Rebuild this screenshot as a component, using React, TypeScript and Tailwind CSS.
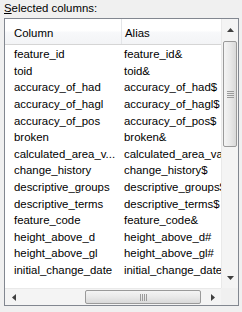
import React from "react";

const rows: [string, string][] = [
  ["feature_id", "feature_id&"],
  ["toid", "toid&"],
  ["accuracy_of_had", "accuracy_of_had$"],
  ["accuracy_of_hagl", "accuracy_of_hagl$"],
  ["accuracy_of_pos", "accuracy_of_pos$"],
  ["broken", "broken&"],
  ["calculated_area_v...", "calculated_area_value#"],
  ["change_history", "change_history$"],
  ["descriptive_groups", "descriptive_groups$"],
  ["descriptive_terms", "descriptive_terms$"],
  ["feature_code", "feature_code&"],
  ["height_above_d", "height_above_d#"],
  ["height_above_gl", "height_above_gl#"],
  ["initial_change_date", "initial_change_date$"],
];

function Arrow({ dir }: { dir: "up" | "down" | "left" | "right" }) {
  const pts: Record<string, string> = {
    up: "0,4 7,4 3.5,0",
    down: "0,0 7,0 3.5,4",
    left: "4,0 4,7 0,3.5",
    right: "0,0 0,7 4,3.5",
  };
  const vertical = dir === "up" || dir === "down";
  return (
    <svg width={vertical ? 7 : 4} height={vertical ? 4 : 7} viewBox={vertical ? "0 0 7 4" : "0 0 4 7"}>
      <polygon points={pts[dir]} fill="#404040" />
    </svg>
  );
}

export default function App() {
  return (
    <div
      className="w-[242px] h-[312px] bg-[#f0f0f0] text-[11.4px] text-black overflow-hidden"
      style={{ fontFamily: '"Liberation Sans", Arial, sans-serif' }}
    >
      <div className="pl-[4px] pt-[1px] h-[15px] leading-[14px]">
        <span className="underline underline-offset-1">S</span>elected columns:
      </div>
      <div className="ml-[4px] mt-[3px] w-[235px] h-[288px] border border-[#828790] bg-white flex flex-col">
        <div className="flex flex-1 min-h-0">
          {/* list area */}
          <div className="w-[216px] flex flex-col overflow-hidden">
            {/* header */}
            <div className="h-[26px] flex border-b border-[#d5d5d5] bg-[linear-gradient(to_bottom,#ffffff_0%,#ffffff_45%,#f7f8fa_55%,#f3f4f6_100%)] shrink-0">
              <div className="w-[117px] pl-[9px] flex items-center pt-[4px] border-r border-[#e3e5e8]">Column</div>
              <div className="flex-1 pl-[3px] flex items-center pt-[4px] whitespace-nowrap">Alias</div>
            </div>
            {/* rows */}
            <div className="flex flex-col pt-[1px]">
              {rows.map(([a, b]) => (
                <div key={a} className="h-[16.6px] flex items-center whitespace-nowrap leading-[16px]">
                  <div className="w-[117px] pl-[9px] overflow-hidden">{a}</div>
                  <div className="w-[99px] pl-[2px] overflow-hidden">{b}</div>
                </div>
              ))}
            </div>
          </div>
          {/* vertical scrollbar */}
          <div className="w-[17px] flex flex-col bg-[#f4f4f4] border-l border-[#e9e9e9]">
            <div className="h-[21px] flex items-center justify-center shrink-0">
              <Arrow dir="up" />
            </div>
            <div className="flex-1 flex flex-col px-[1px] pt-[1px]">
              <div className="h-[106px] rounded-[2px] border border-[#9a9a9a] bg-[linear-gradient(to_right,#f4f4f4_0%,#e9e9e9_50%,#d9d9d9_100%)] flex items-center justify-center">
                <div className="flex flex-col gap-[1px]">
                  <div className="w-[7px] h-[1px] bg-[#9b9b9b]" />
                  <div className="w-[7px] h-[1px] bg-[#9b9b9b]" />
                  <div className="w-[7px] h-[1px] bg-[#9b9b9b]" />
                  <div className="w-[7px] h-[1px] bg-[#9b9b9b]" />
                </div>
              </div>
            </div>
            <div className="h-[21px] flex items-center justify-center shrink-0">
              <Arrow dir="down" />
            </div>
          </div>
        </div>
        {/* horizontal scrollbar */}
        <div className="h-[17px] flex shrink-0">
          <div className="w-[216px] flex bg-[#f4f4f4] border-t border-[#e9e9e9]">
            <div className="w-[17px] flex items-center justify-center shrink-0">
              <Arrow dir="left" />
            </div>
            <div className="flex-1 flex py-[1px] pl-[63px]">
              <div className="w-[116px] rounded-[2px] border border-[#9a9a9a] bg-[linear-gradient(to_bottom,#f4f4f4_0%,#e9e9e9_50%,#d9d9d9_100%)] flex items-center justify-center">
                <div className="flex gap-[1px]">
                  <div className="w-[1px] h-[7px] bg-[#9b9b9b]" />
                  <div className="w-[1px] h-[7px] bg-[#9b9b9b]" />
                  <div className="w-[1px] h-[7px] bg-[#9b9b9b]" />
                  <div className="w-[1px] h-[7px] bg-[#9b9b9b]" />
                </div>
              </div>
            </div>
            <div className="w-[17px] flex items-center justify-center shrink-0">
              <Arrow dir="right" />
            </div>
          </div>
          <div className="w-[17px] bg-[#f0f0f0]" />
        </div>
      </div>
    </div>
  );
}
